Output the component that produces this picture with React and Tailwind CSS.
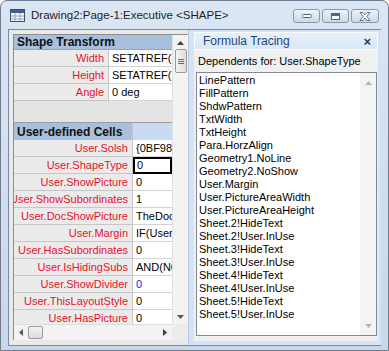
import React from 'react';

const font = { fontFamily: '"Liberation Sans", Arial, sans-serif' };

const transformRows = [
  { name: 'Width', value: 'SETATREF(User.Width)' },
  { name: 'Height', value: 'SETATREF(User.Height)' },
  { name: 'Angle', value: '0 deg' },
];

const userRows = [
  { name: 'User.Solsh', value: '{0BF98D91-5CE2}' },
  { name: 'User.ShapeType', value: '0', selected: true },
  { name: 'User.ShowPicture', value: '0' },
  { name: 'User.ShowSubordinates', value: '1' },
  { name: 'User.DocShowPicture', value: 'TheDoc!User.ShowPicture' },
  { name: 'User.Margin', value: 'IF(User.ShowPicture' },
  { name: 'User.HasSubordinates', value: '0' },
  { name: 'User.IsHidingSubs', value: 'AND(NOT(' },
  { name: 'User.ShowDivider', value: '0', blue: true },
  { name: 'User.ThisLayoutStyle', value: '0' },
  { name: 'User.HasPicture', value: '0' },
];

const dependents = [
  'LinePattern',
  'FillPattern',
  'ShdwPattern',
  'TxtWidth',
  'TxtHeight',
  'Para.HorzAlign',
  'Geometry1.NoLine',
  'Geometry2.NoShow',
  'User.Margin',
  'User.PictureAreaWidth',
  'User.PictureAreaHeight',
  'Sheet.2!HideText',
  'Sheet.2!User.InUse',
  'Sheet.3!HideText',
  'Sheet.3!User.InUse',
  'Sheet.4!HideText',
  'Sheet.4!User.InUse',
  'Sheet.5!HideText',
  'Sheet.5!User.InUse',
];

const Arrow = ({ dir, color = '#3c3c3c' }) => {
  const pts = {
    up: '0,4 3.5,0 7,4',
    down: '0,0 3.5,4 7,0',
    left: '4,0 0,3.5 4,7',
    right: '0,0 4,3.5 0,7',
  }[dir];
  const vertical = dir === 'up' || dir === 'down';
  return (
    <svg width={vertical ? 7 : 4} height={vertical ? 4 : 7}>
      <polygon points={pts} fill={color} />
    </svg>
  );
};

const SheetIcon = () => (
  <svg width="15" height="13" viewBox="0 0 15 13">
    <rect x="0.5" y="0.5" width="14" height="12" fill="#f4f4f4" stroke="#3d4f6e" />
    <rect x="1" y="1" width="13" height="3" fill="#3f5f95" />
    <line x1="1" y1="7" x2="14" y2="7" stroke="#9aa6b8" />
    <line x1="1" y1="10" x2="14" y2="10" stroke="#9aa6b8" />
    <line x1="5" y1="4" x2="5" y2="12" stroke="#9aa6b8" />
    <line x1="10" y1="4" x2="10" y2="12" stroke="#9aa6b8" />
  </svg>
);

const CaptionButton = ({ children, wide }) => (
  <div
    className={`flex items-center justify-center h-[14px] ${wide ? 'w-[28px]' : 'w-[27px]'} rounded-[3px] border border-[#8b98aa] bg-gradient-to-b from-[#eef3f9] to-[#ccd8e7]`}
  >
    {children}
  </div>
);

const LabelRow = ({ row, labelW, last }) => (
  <div className="flex h-[17px] shrink-0">
    <div
      className={`${labelW} shrink-0 flex items-center justify-end pr-[4px] bg-[#ebebeb] border-b border-r border-[#c6c6c6] overflow-hidden whitespace-nowrap text-[#e8112d]`}
    >
      {row.name}
    </div>
    <div
      className={`flex-1 min-w-0 flex items-center whitespace-nowrap overflow-hidden bg-white ${
        row.selected ? 'border-2 border-black pl-[2px]' : 'border-b border-[#d4d4d4] pl-[3px]'
      } ${row.blue ? 'text-[#1a1aff]' : 'text-black'}`}
    >
      {row.value}
    </div>
  </div>
);

export default function App() {
  return (
    <div className="w-[389px] h-[351px] bg-white overflow-hidden text-[11px] text-black" style={font}>
      <div className="w-[389px] h-[351px] rounded-t-[7px] border border-[#6f7c8d] bg-gradient-to-b from-[#dbe6f4] to-[#c9d7ea] flex flex-col">
        {/* Title bar */}
        <div className="h-[28px] shrink-0 flex items-center pl-[9px] pr-[9px]">
          <SheetIcon />
          <span className="ml-[6px] text-[11.5px] text-[#1e1e1e] mt-[2px]">Drawing2:Page-1:Executive &lt;SHAPE&gt;</span>
          <div className="ml-auto flex gap-[2px] mt-[2px]">
            <CaptionButton>
              <svg width="10" height="5"><rect x="0.5" y="0.5" width="9" height="3" rx="1" fill="#fbfcfe" stroke="#56657a" /></svg>
            </CaptionButton>
            <CaptionButton>
              <svg width="9" height="7"><rect x="0.5" y="0.5" width="8" height="6" fill="#fbfcfe" stroke="#56657a" /><rect x="1" y="1" width="7" height="2" fill="#56657a" /></svg>
            </CaptionButton>
            <CaptionButton wide>
              <svg width="12" height="9" viewBox="0 0 12 9">
                <path d="M1 0.5 L4 0.5 L6 2.8 L8 0.5 L11 0.5 L7.8 4.5 L11 8.5 L8 8.5 L6 6.2 L4 8.5 L1 8.5 L4.2 4.5 Z" fill="#fbfcfe" stroke="#56657a" strokeWidth="0.9" />
              </svg>
            </CaptionButton>
          </div>
        </div>

        {/* Client area */}
        <div className="mx-[7px] h-[317px] shrink-0 border border-[#7a8aa0] flex bg-[#f0f0f0]">
          {/* ShapeSheet */}
          <div className="w-[179px] shrink-0 pl-[4px] pt-[4px] pb-[5px] flex flex-col bg-[#e9e9e9]">
            <div className="flex-1 flex flex-col border-l border-t border-[#8d8d8d] bg-[#f0f0f0]">
              <div className="flex h-[289px]">
                <div className="w-[158px] flex flex-col overflow-hidden">
                  <div className="h-[15px] shrink-0 flex items-center pl-[3px] bg-[#a8c0dd] border-b border-[#8fa6c3] font-bold text-[12px] text-[#111]">
                    Shape Transform
                  </div>
                  {transformRows.map((r) => (
                    <LabelRow key={r.name} row={r} labelW="w-[95px]" />
                  ))}
                  <div className="h-[22px] shrink-0 bg-[#e4e4e4] border-b border-[#9d9d9d]" />
                  <div className="h-[17px] shrink-0 flex">
                    <div className="w-[119px] shrink-0 flex items-center pl-[3px] bg-[#a8c0dd] border-r border-[#c6c6c6] font-bold text-[12px] text-[#111] whitespace-nowrap">
                      User-defined Cells
                    </div>
                    <div className="flex-1 bg-[#c9dbf1]" />
                  </div>
                  {userRows.map((r) => (
                    <LabelRow key={r.name} row={r} labelW="w-[119px]" />
                  ))}
                </div>
                {/* vertical scrollbar */}
                <div className="w-[16px] shrink-0 flex flex-col items-center bg-[#f3f3f3] border-l border-[#e0e0e0]">
                  <div className="h-[14px] flex items-center justify-center pt-[2px]">
                    <Arrow dir="up" />
                  </div>
                  <div className="mt-[0px] w-[12px] h-[24px] rounded-[2px] border border-[#9a9a9a] bg-gradient-to-r from-[#f4f4f4] to-[#dcdcdc] flex flex-col items-center justify-center gap-[1px]">
                    <div className="w-[6px] h-[1px] bg-[#6b6b6b]" />
                    <div className="w-[6px] h-[1px] bg-[#6b6b6b]" />
                    <div className="w-[6px] h-[1px] bg-[#6b6b6b]" />
                  </div>
                  <div className="flex-1" />
                  <div className="h-[14px] flex items-center justify-center">
                    <Arrow dir="down" color="#5a5a5a" />
                  </div>
                </div>
              </div>
              {/* horizontal scrollbar */}
              <div className="h-[16px] flex">
                <div className="w-[158px] flex items-center bg-[#f3f3f3] border-t border-[#e0e0e0]">
                  <div className="w-[14px] flex justify-center"><Arrow dir="left" color="#5a5a5a" /></div>
                  <div className="w-[15px] h-[13px] rounded-[2px] border border-[#9a9a9a] bg-gradient-to-b from-[#f4f4f4] to-[#dcdcdc]" />
                  <div className="flex-1" />
                  <div className="w-[14px] flex justify-center"><Arrow dir="right" /></div>
                </div>
                <div className="w-[16px] bg-[#ececec]" />
              </div>
            </div>
          </div>

          {/* Formula Tracing */}
          <div className="w-[193px] shrink-0 pl-[5px] pr-[3px] pt-[2px] pb-[4px] bg-[#d4e3f5] border-l border-[#b7c8dd]">
            <div className="h-full flex flex-col bg-[#f0f0f0]">
              <div className="h-[18px] shrink-0 flex items-center pl-[8px] pr-[6px] bg-gradient-to-b from-[#e8f0fa] to-[#d9e6f6] border border-[#f7fbff]">
                <span className="text-[12px] text-[#1f4878]">Formula Tracing</span>
                <span className="ml-auto text-[13px] font-bold text-[#1c3f6e] leading-none">×</span>
              </div>
              <div className="h-[22px] shrink-0 flex items-center pl-[4px] whitespace-nowrap">
                Dependents for: User.ShapeType
              </div>
              <div className="ml-[2px] mr-[1px] h-[264px] shrink-0 flex border border-[#828790] bg-white">
                <div className="flex-1 flex flex-col pt-[1px] pl-[2px]">
                  {dependents.map((d) => (
                    <div key={d} className="h-[13px] leading-[13px] whitespace-nowrap">{d}</div>
                  ))}
                </div>
                <div className="w-[16px] flex flex-col items-center bg-[#f4f4f4]">
                  <div className="h-[16px] flex items-center justify-center pt-[4px]">
                    <Arrow dir="up" color="#b4b4b4" />
                  </div>
                  <div className="flex-1" />
                  <div className="h-[16px] flex items-center justify-center pb-[2px]">
                    <Arrow dir="down" color="#b4b4b4" />
                  </div>
                </div>
              </div>
            </div>
          </div>
        </div>
      </div>
    </div>
  );
}
